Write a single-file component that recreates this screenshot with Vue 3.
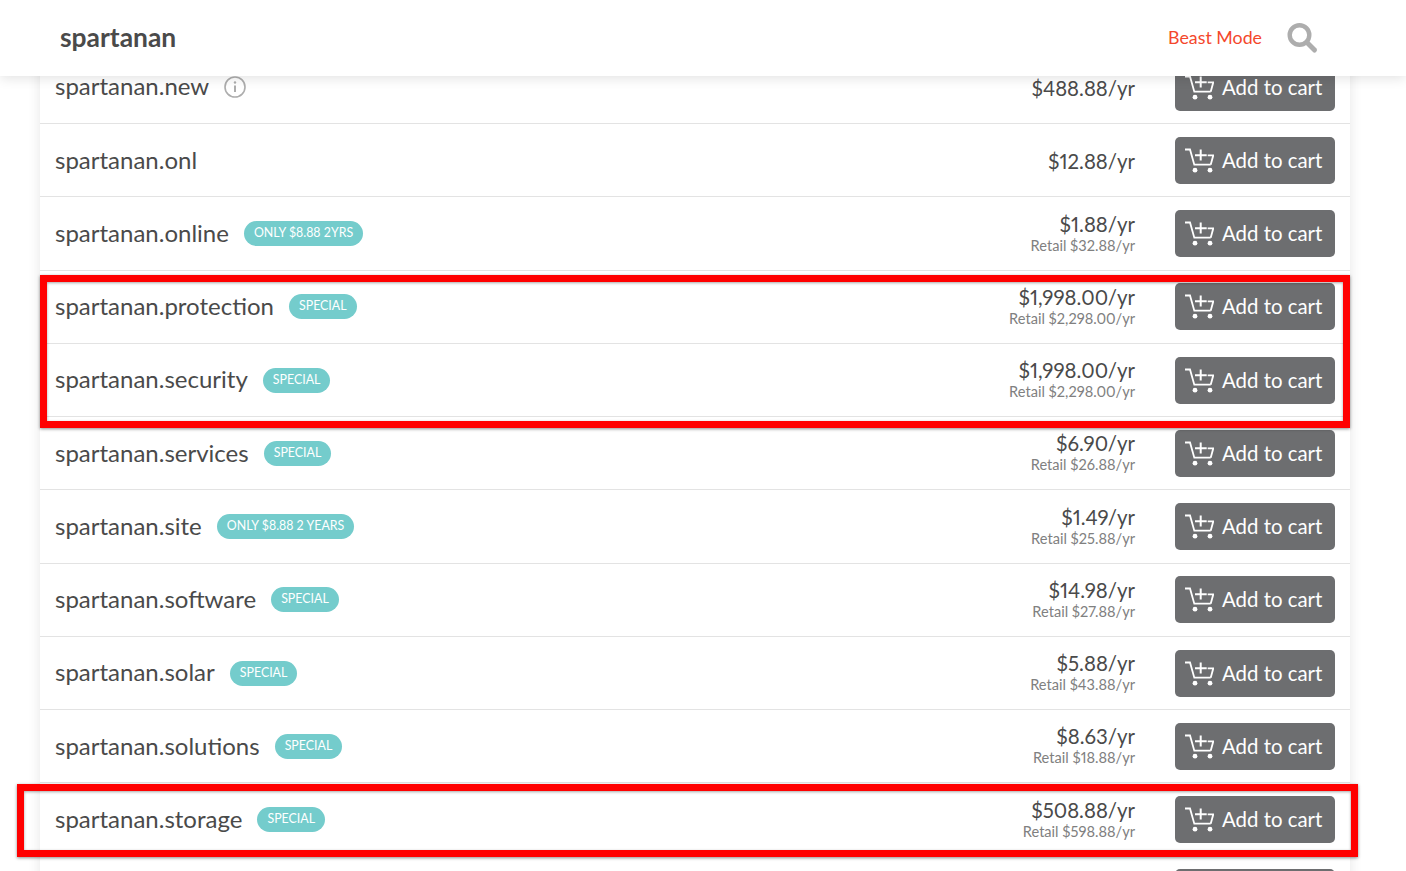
<script setup>
const rows = [
  { name: 'spartanan.new', info: true, price: '$488.88/yr' },
  { name: 'spartanan.onl', price: '$12.88/yr' },
  { name: 'spartanan.online', badge: 'ONLY $8.88 2YRS', price: '$1.88/yr', retail: 'Retail $32.88/yr' },
  { name: 'spartanan.protection', badge: 'SPECIAL', price: '$1,998.00/yr', retail: 'Retail $2,298.00/yr' },
  { name: 'spartanan.security', badge: 'SPECIAL', price: '$1,998.00/yr', retail: 'Retail $2,298.00/yr' },
  { name: 'spartanan.services', badge: 'SPECIAL', price: '$6.90/yr', retail: 'Retail $26.88/yr' },
  { name: 'spartanan.site', badge: 'ONLY $8.88 2 YEARS', price: '$1.49/yr', retail: 'Retail $25.88/yr' },
  { name: 'spartanan.software', badge: 'SPECIAL', price: '$14.98/yr', retail: 'Retail $27.88/yr' },
  { name: 'spartanan.solar', badge: 'SPECIAL', price: '$5.88/yr', retail: 'Retail $43.88/yr' },
  { name: 'spartanan.solutions', badge: 'SPECIAL', price: '$8.63/yr', retail: 'Retail $18.88/yr' },
  { name: 'spartanan.storage', badge: 'SPECIAL', price: '$508.88/yr', retail: 'Retail $598.88/yr' },
  { name: '', price: '' }
]
</script>

<template>
  <div class="page">
    <header class="topbar">
      <span class="logo">spartanan</span>
      <span class="beast">Beast Mode</span>
      <svg class="search" width="32" height="32" viewBox="0 0 32 32" fill="none" stroke="#adadad">
        <circle cx="12.5" cy="13" r="9.8" stroke-width="4.4" />
        <path d="M20 20.5l7.5 7.5" stroke-width="5" stroke-linecap="round" />
      </svg>
    </header>

    <main class="list">
      <div v-for="(r, i) in rows" :key="i" class="row">
        <div class="name">{{ r.name }}</div>
        <svg v-if="r.info" class="info" width="22" height="22" viewBox="0 0 22 22" fill="none" stroke="#adadad">
          <circle cx="11" cy="11" r="10" stroke-width="1.6" />
          <path d="M11 9.5v6.5" stroke-width="2" />
          <circle cx="11" cy="6.5" r="1.2" fill="#adadad" stroke="none" />
        </svg>
        <span v-if="r.badge" class="badge">{{ r.badge }}</span>
        <div class="prices">
          <div class="price">{{ r.price }}</div>
          <div v-if="r.retail" class="retail">{{ r.retail }}</div>
        </div>
        <button class="cart">
          <template v-if="r.name">
            <svg width="29" height="25" viewBox="0 0 29 25" fill="none" stroke="#fff">
              <path d="M0 1.5h5l4.3 15.2h16.4" stroke-width="1.8" />
              <path d="M22.7 7.3h5.6l-2.6 9.4" stroke-width="1.8" />
              <path d="M15.7 1.5v11M10 7.3h11.7" stroke-width="2" />
              <circle cx="10" cy="22.2" r="2.4" fill="#fff" stroke="none" />
              <circle cx="25" cy="22.2" r="2.4" fill="#fff" stroke="none" />
            </svg>
            <span class="cart-label">Add to cart</span>
          </template>
        </button>
      </div>
    </main>

    <div class="mark mark-a"></div>
    <div class="mark mark-b"></div>
  </div>
</template>

<style>
html, body { margin: 0; background: #fff; }
</style>

<style scoped>
.page {
  position: relative;
  height: 871px;
  overflow: hidden;
  background: #fff;
  font-family: Lato, "Open Sans", sans-serif;
  color: #4a4a4a;
}
.topbar {
  position: absolute;
  top: 0;
  left: 0;
  right: 0;
  height: 76px;
  z-index: 2;
  display: flex;
  align-items: center;
  padding: 0 87px 0 60px;
  background: #fff;
  box-shadow: 0 2px 12px rgba(0, 0, 0, 0.12);
}
.logo {
  font-size: 26.4px;
  font-weight: 700;
  margin-right: auto;
  padding-bottom: 2px;
}
.beast {
  font-size: 17.8px;
  color: #f4472c;
  margin-right: 25px;
  padding-bottom: 2px;
}
.list {
  width: 1310px;
  margin: 0 0 0 40px;
  padding-top: 50.9px;
  box-shadow: 0 0 12px rgba(0, 0, 0, 0.1);
}
.row {
  box-sizing: border-box;
  height: 73.25px;
  display: flex;
  align-items: center;
  padding: 0 15px;
  border-bottom: 1px solid #e3e3e3;
}
.name {
  font-size: 24px;
  line-height: 30px;
  padding-bottom: 1.5px;
}
.info { margin-left: 15px; }
.badge {
  margin-left: 15px;
  height: 25px;
  line-height: 24px;
  padding: 0 10px;
  border-radius: 13px;
  background: #74cccc;
  color: #fff;
  font-size: 12.4px;
  white-space: nowrap;
}
.prices {
  margin-left: auto;
  margin-right: 40px;
  padding-top: 1px;
  text-align: right;
  font-variant-numeric: proportional-nums;
}
.price {
  font-size: 20.4px;
  line-height: 22px;
}
.retail {
  font-size: 14.6px;
  line-height: 20px;
  margin-top: 1px;
  color: #808080;
}
.cart {
  box-sizing: border-box;
  width: 160px;
  height: 47px;
  display: flex;
  align-items: center;
  gap: 8px;
  padding: 0 0 0 10px;
  border: 0;
  border-radius: 5px;
  background: #6d6e70;
  color: #fff;
  font-family: inherit;
  font-size: 20.4px;
}
.cart-label { padding-bottom: 1px; }
.mark {
  position: absolute;
  box-sizing: border-box;
  border: 7px solid #ff0000;
  box-shadow: 0 1px 3px rgba(0, 0, 0, 0.45), inset 0 1px 3px rgba(0, 0, 0, 0.35);
  z-index: 1;
}
.mark-a { left: 40px; top: 275px; width: 1310px; height: 153px; }
.mark-b { left: 17px; top: 784px; width: 1341px; height: 73px; }
</style>
